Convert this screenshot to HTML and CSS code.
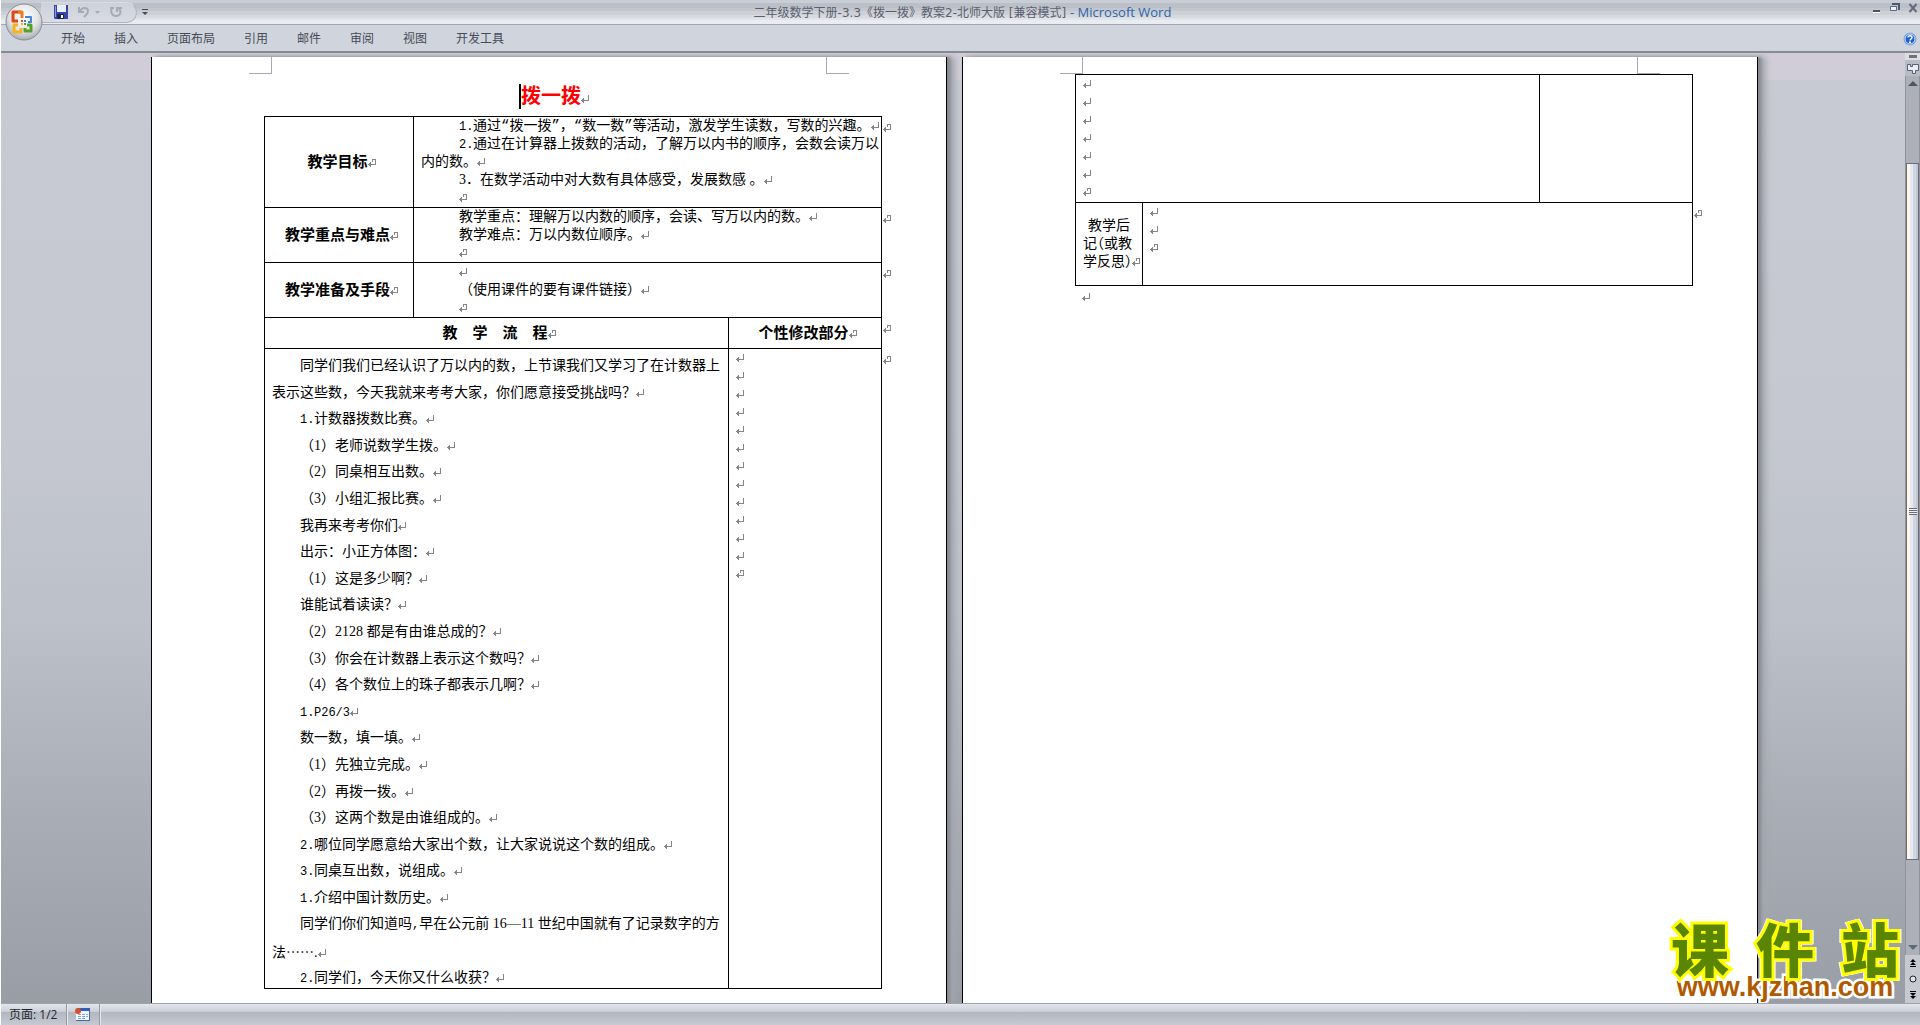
FILE: index.html
```html
<!DOCTYPE html>
<html lang="zh-CN">
<head>
<meta charset="utf-8">
<title>二年级数学下册-3.3《拨一拨》教案2-北师大版 - Microsoft Word</title>
<link rel="stylesheet" href="styles.css">
</head>
<body>
<header class="titlebar">
  <div class="quick">
    <button class="tool" aria-label="保存"><svg width="14" height="14" viewBox="0 0 14 14"><path d="M0 0h14v14H1l-1-1z" fill="#3a44a8"/><path d="M3 0h9v7H3z" fill="#e9eefb"/><path d="M1 1h1v11H1z" fill="#8d98e6"/><path d="M3 9h7v5H3z" fill="#1c2350"/><path d="M7 10h2v3H7z" fill="#fff"/></svg></button>
    <button class="tool undo" aria-label="撤销"><svg width="12" height="12" viewBox="0 0 12 12"><path d="M1 1v5h5" fill="none" stroke="#a6abb8" stroke-width="2"/><path d="M2 5c2-4 8-4 8 0 0 3-2 4-4 6" fill="none" stroke="#a6abb8" stroke-width="2"/></svg></button>
    <button class="tool drop" aria-label="撤销列表"><svg width="5" height="3" viewBox="0 0 5 3"><path d="M0 0h5L2.500 3z" fill="#a6abb8"/></svg></button>
    <button class="tool redo" aria-label="重复"><svg width="12" height="12" viewBox="0 0 12 12"><path d="M2 2C0 6 2 10 6 10s6-4 3-7" fill="none" stroke="#a6abb8" stroke-width="2"/><path d="M0 2h4M7 6V2h5" fill="none" stroke="#a6abb8" stroke-width="2"/></svg></button>
  </div>
  <button class="tool more" aria-label="自定义快速访问工具栏"><svg width="6" height="6" viewBox="0 0 6 6"><path d="M0 0h6v1H0zM0 3h6L3 6z" fill="#4a4e58"/></svg></button>
  <h1 class="caption">二年级数学下册-3.3《拨一拨》教案2-北师大版 [兼容模式] <span class="app">- Microsoft Word</span></h1>
  <div class="window-buttons">
    <button class="tool" aria-label="最小化"><svg width="10" height="10" viewBox="0 0 10 10"><path d="M1 7h7v2H1z" fill="#50545e"/><path d="M1 9h7v1H1z" fill="#fff"/></svg></button>
    <button class="tool" aria-label="还原"><svg width="10" height="10" viewBox="0 0 10 10"><path d="M2 1h7v6" fill="none" stroke="#50586a" stroke-width="2"/><path d="M.5 3.500h6v4h-6z" fill="#eef1f7" stroke="#5d6a86"/></svg></button>
    <button class="tool" aria-label="关闭"><svg width="10" height="10" viewBox="0 0 10 10"><path d="M1.500 1l7 8M8.500 1l-7 8" stroke="#626a7c" stroke-width="2"/></svg></button>
  </div>
</header>
<button class="office" aria-label="Office 按钮"><svg width="38" height="38" viewBox="0 0 38 38">
  <defs><radialGradient id="orb" cx=".5" cy=".35" r=".65"><stop offset="0" stop-color="#fff"/><stop offset=".6" stop-color="#e3e4e8"/><stop offset="1" stop-color="#a9acb4"/></radialGradient></defs>
  <circle cx="19" cy="19" r="18" fill="url(#orb)" stroke="#8b8e97"/>
  <g fill="none" stroke-width="3" stroke-linejoin="round"><path d="M16 9H8v9h5" stroke="#dc4a12"/><path d="M13 9h4v6" stroke="#ee7b1e"/><path d="M20 14h6v5h-3" stroke="#3f86d6" stroke-width="2"/><path d="M13 22H9v7h7v-4" stroke="#f5b51a"/><path d="M22 22h4v6h-6v-3" stroke="#58a02c"/></g>
  <path d="M16 17h2v2h-2z" fill="#dc4a12"/><path d="M19 17h2v2h-2z" fill="#3f86d6"/><path d="M16 20h2v2h-2z" fill="#f5b51a"/><path d="M19 20h2v2h-2z" fill="#58a02c"/></svg></button>
<nav class="ribbon">
  <button class="tab">开始</button>
  <button class="tab">插入</button>
  <button class="tab">页面布局</button>
  <button class="tab">引用</button>
  <button class="tab">邮件</button>
  <button class="tab">审阅</button>
  <button class="tab">视图</button>
  <button class="tab">开发工具</button>
  <button class="tool help" aria-label="帮助"><svg width="14" height="14" viewBox="0 0 14 14"><circle cx="7" cy="7" r="6" fill="#1d5fd0" stroke="#7fa3d8"/><circle cx="7" cy="7" r="5" fill="none" stroke="#dfeafc"/><path d="M5 5.500c0-2.500 4-2.500 4 0C9 7 7 7 7 8.500" fill="none" stroke="#fff" stroke-width="1.500"/><path d="M6 9.500h2V11H6z" fill="#fff"/></svg></button>
</nav>
<div class="workspace">
  <main class="canvas">
    <article class="page">
      <div class="corners corners-first"></div>
      <h2 class="lesson"><span class="caret"></span><span class="para">拨一拨</span></h2>
      <table class="plan">
        <colgroup><col class="c-label"><col class="c-text"><col class="c-notes"><col class="c-end"></colgroup>
        <tr class="tall">
          <th scope="row"><span class="cell">教学目标</span></th>
          <td colspan="2"><div class="lines five">
            <p class="in para"><span class="num">1.</span>通过<span class="quote">“</span>拨一拨<span class="quote">”</span>，<span class="quote">“</span>数一数<span class="quote">”</span>等活动，激发学生读数，写数的兴趣。</p>
            <p class="in"><span class="num">2.</span>通过在计算器上拨数的活动，了解万以内书的顺序，会数会读万以</p>
            <p class="para">内的数。</p>
            <p class="in para">3．在数学活动中对大数有具体感受，发展数感 。</p>
            <p class="in cell"></p></div></td>
          <td class="end cell"></td>
        </tr>
        <tr>
          <th scope="row"><span class="cell">教学重点与难点</span></th>
          <td colspan="2"><div class="lines three">
            <p class="in para">教学重点：理解万以内数的顺序，会读、写万以内的数。</p>
            <p class="in para">教学难点：万以内数位顺序。</p>
            <p class="in cell"></p></div></td>
          <td class="end cell"></td>
        </tr>
        <tr>
          <th scope="row"><span class="cell">教学准备及手段</span></th>
          <td colspan="2"><div class="lines three">
            <p class="in para"></p>
            <p class="in para">（使用课件的要有课件链接）</p>
            <p class="in cell"></p></div></td>
          <td class="end cell"></td>
        </tr>
        <tr class="heads">
          <th colspan="2" scope="col"><span class="cell">教　学　流　程</span></th>
          <th scope="col"><span class="cell">个性修改部分</span></th>
          <td class="end cell"></td>
        </tr>
        <tr>
          <td colspan="2"><div class="flow">
            <p class="first">同学们我们已经认识了万以内的数，上节课我们又学习了在计数器上</p>
            <p class="para">表示这些数，今天我就来考考大家，你们愿意接受挑战吗？</p>
            <p class="first para"><span class="num">1.</span>计数器拨数比赛。</p>
            <p class="first para">（1）老师说数学生拨。</p>
            <p class="first para">（2）同桌相互出数。</p>
            <p class="first para">（3）小组汇报比赛。</p>
            <p class="first para">我再来考考你们</p>
            <p class="first para">出示：小正方体图：</p>
            <p class="first para">（1）这是多少啊？</p>
            <p class="first para">谁能试着读读？</p>
            <p class="first para">（2）2128 都是有由谁总成的？</p>
            <p class="first para">（3）你会在计数器上表示这个数吗？</p>
            <p class="first para">（4）各个数位上的珠子都表示几啊？</p>
            <p class="first para"><span class="num">1.</span><span class="mono">P26/3</span></p>
            <p class="first para">数一数，填一填。</p>
            <p class="first para">（1）先独立完成。</p>
            <p class="first para">（2）再拨一拨。</p>
            <p class="first para">（3）这两个数是由谁组成的。</p>
            <p class="first para"><span class="num">2.</span>哪位同学愿意给大家出个数，让大家说说这个数的组成。</p>
            <p class="first para"><span class="num">3.</span>同桌互出数，说组成。</p>
            <p class="first para"><span class="num">1.</span>介绍中国计数历史。</p>
            <p class="first">同学们你们知道吗<span class="mono">,</span>早在公元前 16—11 世纪中国就有了记录数字的方</p>
            <p class="para">法<span class="dots">……</span>.</p>
            <p class="first para"><span class="num">2.</span>同学们，今天你又什么收获？</p></div></td>
          <td><div class="lines">
            <p class="para"></p><p class="para"></p><p class="para"></p><p class="para"></p><p class="para"></p><p class="para"></p><p class="para"></p><p class="para"></p><p class="para"></p><p class="para"></p><p class="para"></p><p class="para"></p><p class="cell"></p></div></td>
          <td class="end cell"></td>
        </tr>
      </table>
    </article>
    <article class="page page-next">
      <div class="corners corners-next"></div>
      <table class="plan">
        <colgroup><col class="c-after"><col class="c-wide"><col class="c-notes"><col class="c-end"></colgroup>
        <tr class="spill">
          <td colspan="2"><div class="lines">
            <p class="para"></p><p class="para"></p><p class="para"></p><p class="para"></p><p class="para"></p><p class="para"></p><p class="cell"></p></div></td>
          <td></td>
          <td class="end"></td>
        </tr>
        <tr class="review">
          <td class="reflect"><p>教学后</p><p>记<span class="half">（</span>或教</p><p class="cell">学反思<span class="half">）</span></p></td>
          <td colspan="2"><div class="lines"><p class="para"></p><p class="para"></p><p class="cell"></p></div></td>
          <td class="end cell"></td>
        </tr>
      </table>
      <p class="tail para"></p>
    </article>
    <div class="watermark"><strong class="brand">课件站</strong><a class="site" href="#">www.kjzhan.com</a></div>
  </main>
  <aside class="scroll">
    <div class="split"></div>
    <button class="tool ruler" aria-label="标尺"><svg width="12" height="12" viewBox="0 0 12 12"><path d="M.5 2.500h3v2h2v-2h6v6h-3v3h-3v-3h-5z" fill="#f1e9f4" stroke="#4d6577"/></svg></button>
    <div class="track">
      <button class="tool arrow" aria-label="向上滚动"><svg width="10" height="5" viewBox="0 0 10 5"><path d="M0 5h10L5 0z" fill="#50545e"/></svg></button>
      <div class="thumb"><span class="grip"></span></div>
      <button class="tool arrow low" aria-label="向下滚动"><svg width="10" height="5" viewBox="0 0 10 5"><path d="M0 0h10L5 5z" fill="#5d6a78"/></svg></button>
    </div>
    <div class="browse">
      <button class="tool" aria-label="前一页"><svg width="6" height="8" viewBox="0 0 6 8"><path d="M0 3l3-3 3 3zM0 6l3-3 3 3zM0 7h6v1H0z"/></svg></button>
      <button class="tool" aria-label="选择浏览对象"><svg width="8" height="8" viewBox="0 0 8 8"><circle cx="4" cy="4" r="3" fill="#e1e3e8" stroke="#222"/></svg></button>
      <button class="tool" aria-label="下一页"><svg width="6" height="8" viewBox="0 0 6 8"><path d="M0 0h6v1H0zM0 2h6L3 5zM0 5h6L3 8z"/></svg></button>
    </div>
  </aside>
</div>
<footer class="status">
  <button class="status-item">页面: 1/2</button>
  <button class="status-item status-icon" aria-label="宏"><svg width="15" height="13" viewBox="0 0 15 13"><path d="M2 1h13v12H1V6z" fill="#f4f7fd"/><path d="M2 0h13v3H2z" fill="#2f5fb8"/><path d="M1 12h14v1H1zM14 2h1v11h-1z" fill="#4168ad"/><path d="M3 6h3v1H3zM7 6h3v1H7zM11 6h2v1h-2zM3 8h3v1H3zM7 8h3v1H7zM11 8h2v1h-2zM3 10h3v1H3zM7 10h3v1H7z" fill="#8ba6d6"/><circle cx="3" cy="3" r="3" fill="#d4512c"/></svg></button>
</footer>
</body>
</html>
```

FILE: styles.css
```css
* { box-sizing: border-box; }

body {
  margin: 0;
  padding-left: 1px;
  height: 100vh;
  display: flex;
  flex-direction: column;
  overflow: hidden;
  position: relative;
  background: #fff;
  font: 12px/16px "Open Sans", "Noto Sans CJK SC", sans-serif;
  color: #464b57;
}

h1, h2, p { margin: 0; font-weight: normal; }

button {
  margin: 0;
  padding: 0;
  border: 0;
  background: none;
  font: inherit;
  color: inherit;
}

.tool { display: flex; align-items: center; justify-content: center; }

/* title bar */
.titlebar {
  height: 25px;
  flex: none;
  display: flex;
  align-items: center;
  background: linear-gradient(#c9cdd6 0 3px, #bbbfc8 3px 8px, #c3c6ce 8px 11px, #cdd0d7 11px 15px, #d8dade 15px 18px, #e2e4e8 18px 20px, #e9ecf3 20px);
  border-bottom: 1px solid #a2a4ae;
}
.quick {
  width: 96px;
  height: 21px;
  margin-left: 40px;
  padding-left: 13px;
  display: flex;
  align-items: center;
  border: 1px solid #b0b3bd;
  border-left: 0;
  border-top-color: #d8dbe2;
  border-radius: 0 11px 11px 0;
  background: linear-gradient(#cdd1da, #d9dce4);
}
.undo { margin-left: 10px; }
.drop { margin-left: 5px; }
.redo { margin-left: 10px; }
.more { margin-left: 5px; }
.caption {
  flex: 1;
  text-align: center;
  font: 12px/24px "DejaVu Sans", "Noto Sans CJK SC", sans-serif;
  color: #5b6070;
  white-space: nowrap;
  padding-right: 95px;
}
.app { font-family: "Open Sans", sans-serif; font-size: 13px; color: #2a66a8; }
.window-buttons { display: flex; gap: 8px; padding: 0 2px 8px 0; }

.office { position: absolute; left: 5px; top: 3px; z-index: 2; line-height: 0; }

/* ribbon tabs */
.ribbon {
  height: 28px;
  flex: none;
  display: flex;
  align-items: center;
  padding: 2px 3px 0 46px;
  background: #d0d4dd;
  border-bottom: 2px solid #858a93;
}
.tab { padding: 0 15px 0 14px; height: 24px; }
.help { margin-left: auto; }

/* document area */
.workspace { flex: 1; min-height: 0; display: flex; }
.canvas {
  flex: 1;
  min-width: 0;
  display: flex;
  justify-content: center;
  gap: 15px;
  padding: 4px 0 0 3px;
  overflow: hidden;
  position: relative;
  background: linear-gradient(#d0cdd8 0 27px, #c8cad3 27px, #c5c8d1 40%, #bcc0c9 60%, #a9adb5 80%, #999da6);
}
.page {
  width: 796px;
  flex: none;
  padding: 0 96px 0 112px;
  position: relative;
  background: #fff;
  border: solid #000;
  border-width: 0 1px;
  box-shadow: 3px 0 3px #85888f, 8px 0 6px #a4a7af;
  color: #000;
  font: 14px/18px "Liberation Serif", "Noto Sans CJK SC", serif;
}
.page-next { padding: 17px 96px 0 112px; }

/* margin corner marks */
.corners { position: absolute; top: 0; height: 17px; border: solid #a9a9b6; border-width: 0 1px; }
.corners::before, .corners::after {
  content: "";
  position: absolute;
  bottom: 0;
  width: 23px;
  border-bottom: 1px solid #a9a9b6;
}
.corners::before { right: 100%; }
.corners::after { left: 100%; }
.corners-first { left: 119px; width: 556px; }
.corners-next { left: 119px; width: 556px; }

.lesson {
  display: flex;
  justify-content: center;
  align-items: center;
  padding: 26px 6px 7px 0;
  font-size: 20px;
  line-height: 26px;
  font-weight: bold;
  color: #f00;
}
.caret { width: 2px; height: 25px; background: #000; }

/* paragraph mark and end-of-cell mark */
.para::after, .cell::after {
  content: "";
  display: inline-block;
  width: 8px;
  height: 8px;
  --ink: linear-gradient(#85858a, #85858a) no-repeat;
  background: var(--ink) 7px 0 / 1px 6px, var(--ink) 0 5px / 7px 1px, var(--ink) 1px 4px / 1px 3px, var(--ink) 2px 3px / 1px 5px;
}
.cell::after {
  background: var(--ink) 7px 0 / 1px 6px, var(--ink) 0 5px / 7px 1px, var(--ink) 1px 4px / 1px 3px, var(--ink) 2px 3px / 1px 5px, var(--ink) 4px 0 / 4px 1px, var(--ink) 4px 1px / 1px 2px;
}

/* lesson plan table */
.plan { width: 633px; table-layout: fixed; border-collapse: collapse; }
.plan td, .plan th { border: 1px solid #000; padding: 0 7px; vertical-align: top; }
.plan th { font-size: 15px; font-weight: bold; vertical-align: middle; text-align: center; white-space: nowrap; padding-left: 12px; }
.plan td.end { border: 0; padding: 6px 0 0 1px; line-height: 10px; }
.plan p { white-space: nowrap; }
.c-label { width: 149px; }
.c-text { width: 315px; }
.c-notes { width: 153px; }
.c-end { width: 16px; }
.c-after { width: 67px; }
.c-wide { width: 397px; }

.lines p { height: 18px; }
.five, .three { display: flex; flex-direction: column; justify-content: space-between; }
.five { min-height: 90px; }
.three { min-height: 54px; }
.in { padding-left: 38px; }
.num { display: inline-block; width: 14px; }
.num, .mono { font-family: "Liberation Mono", monospace; font-size: 12px; }
.quote { font-family: "Liberation Mono", monospace; }
.dots { font-family: "Noto Sans CJK SC", sans-serif; }
.heads { height: 31px; }
.flow {
  min-height: 639px;
  padding-top: 7px;
  display: flex;
  flex-direction: column;
  justify-content: space-between;
}
.flow p { line-height: 20px; height: 20px; }
.first { padding-left: 28px; }

.spill { height: 128px; }
.review { height: 83px; }
.plan .reflect { vertical-align: middle; }
.reflect p:first-child { padding-left: 5px; }
.half { font-feature-settings: "halt"; }
.tail { padding: 2px 0 0 7px; }

/* site logo over the page corner */
.watermark {
  position: absolute;
  right: 6px;
  bottom: 2px;
  width: 228px;
  display: flex;
  flex-direction: column;
}
.brand {
  font: 900 58px/52px "Noto Sans CJK SC", sans-serif;
  color: #5a8500;
  text-align-last: justify;
  -webkit-text-stroke: 6px #ff0;
  paint-order: stroke fill;
  filter: drop-shadow(1px 0 #fff) drop-shadow(-1px 0 #fff);
}
.site {
  font: bold 27px/28px "Liberation Sans", sans-serif;
  color: #b05a00;
  text-decoration: none;
  text-align: center;
  -webkit-text-stroke: 5px #fff;
  paint-order: stroke fill;
}

/* vertical scroll bar */
.scroll { width: 15px; flex: none; display: flex; flex-direction: column; background: #b8bcc6; }
.split { height: 7px; flex: none; background: #dcdee3; border: 2px solid #dcdee3; border-left-width: 4px; }
.split::after { content: ""; display: block; height: 3px; width: 8px; background: #6f7178; }
.ruler { height: 16px; flex: none; }
.track {
  flex: 1;
  min-height: 0;
  display: flex;
  flex-direction: column;
  background: #adb0b9;
  border: solid #8f939d;
  border-width: 0 1px;
}
.arrow { height: 15px; flex: none; }
.thumb {
  flex: 697;
  margin-top: 72px;
  margin-bottom: 80px;
  display: flex;
  align-items: center;
  justify-content: center;
  border: 1px solid #6b6e78;
  background: linear-gradient(90deg, #fff8e6 0 3px, #e6e9f2 3px 6px, #d2d6e2 6px 9px, #c3c7d2 9px);
}
.grip { width: 8px; height: 7px; background: repeating-linear-gradient(#6b6e78 0 1px, #eef0f5 1px 2px); }
.browse {
  height: 48px;
  flex: none;
  display: flex;
  flex-direction: column;
  justify-content: space-around;
  background: #c6c9d1;
}

/* status bar */
.status {
  height: 22px;
  flex: none;
  display: flex;
  border-top: 1px solid #9fa2aa;
  background: linear-gradient(#e3e6ec, #ccd0d8 35%, #b2b6c0 40%, #c6cad3);
  color: #23262e;
}
.status-item { padding: 0 9px 0 8px; border-right: 1px solid #94979f; box-shadow: 1px 0 #e8eaef; }
.status-icon { display: flex; align-items: center; }
```
